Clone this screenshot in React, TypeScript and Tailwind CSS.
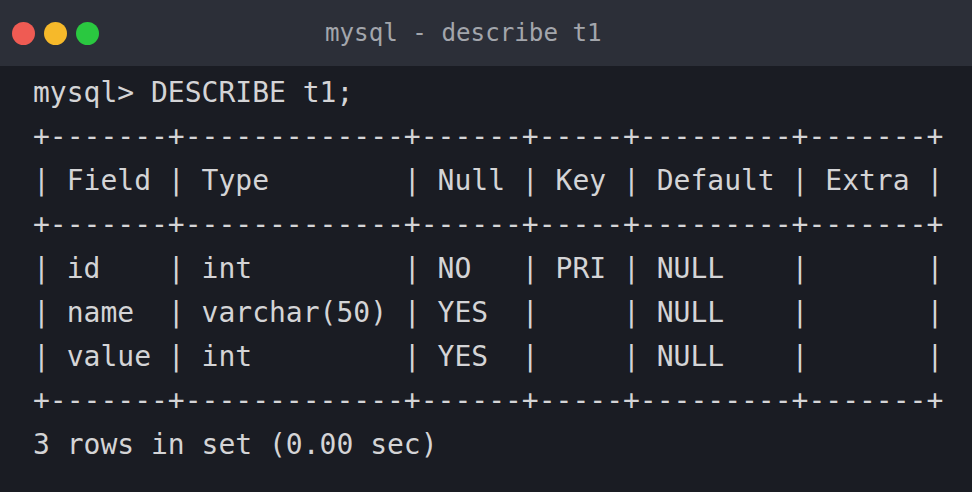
import React from 'react'

const lines = [
  'mysql> DESCRIBE t1;',
  '+-------+-------------+------+-----+---------+-------+',
  '| Field | Type        | Null | Key | Default | Extra |',
  '+-------+-------------+------+-----+---------+-------+',
  '| id    | int         | NO   | PRI | NULL    |       |',
  '| name  | varchar(50) | YES  |     | NULL    |       |',
  '| value | int         | YES  |     | NULL    |       |',
  '+-------+-------------+------+-----+---------+-------+',
  '3 rows in set (0.00 sec)',
]

export default function App() {
  return (
    <div className="w-[972px] h-[492px] bg-[#1a1c23] flex flex-col overflow-hidden font-['DejaVu_Sans_Mono',monospace]">
      <div className="h-[66px] bg-[#2c2f38] flex items-center px-3 shrink-0">
        <div className="flex gap-[9px]">
          <span className="w-[23px] h-[23px] rounded-full bg-[#ef5b53]" />
          <span className="w-[23px] h-[23px] rounded-full bg-[#f6b92a]" />
          <span className="w-[23px] h-[23px] rounded-full bg-[#2ac840]" />
        </div>
        <div className="ml-[226px] text-[24.2px] text-[#a3a6ac]">mysql - describe t1</div>
      </div>
      <pre className="pl-[33px] pt-[5px] text-[28px] leading-[44px] text-[#d4d4d6] font-['DejaVu_Sans_Mono',monospace]">
        {lines.join('\n')}
      </pre>
    </div>
  )
}
